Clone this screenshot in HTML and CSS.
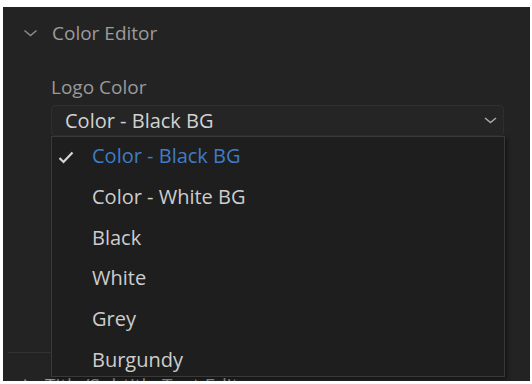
FILE: index.html
```html
<!DOCTYPE html>
<html>
<head>
	<title>Color Editor</title>
	<link rel="stylesheet" href="styles.css">
</head>
<body>
	<div class="panel">
		<div class="section-head">
			<svg class="section-head__icon" width="15" height="8" viewBox="0 0 15 8"><path d="M1.5 1.5 L7.5 6.5 L13.5 1.5" fill="none" stroke="#8a8a8a" stroke-width="1.6"/></svg>
			<span class="section-head__title">Color Editor</span>
		</div>
		<div class="field">
			<div class="field__label">Logo Color</div>
			<div class="select">
				<span class="select__value">Color - Black BG</span>
				<svg class="select__icon" width="13" height="7" viewBox="0 0 13 7"><path d="M1 1 L6.5 5.5 L12 1" fill="none" stroke="#a8a8a8" stroke-width="1.6"/></svg>
				<ul class="menu">
					<li class="menu__item menu__item--active">
						<svg class="menu__check" width="16" height="13" viewBox="0 0 16 13"><path d="M1.5 7 L5.5 11 L14.5 1.5" fill="none" stroke="#d6d6d6" stroke-width="2.2"/></svg>
						Color - Black BG
					</li>
					<li class="menu__item">Color - White BG</li>
					<li class="menu__item">Black</li>
					<li class="menu__item">White</li>
					<li class="menu__item">Grey</li>
					<li class="menu__item">Burgundy</li>
				</ul>
			</div>
		</div>
		<div class="divider"></div>
		<div class="section-head section-head--next">
			<svg class="section-head__icon" width="8" height="15" viewBox="0 0 8 15"><path d="M1.5 1.5 L6.5 7.5 L1.5 13.5" fill="none" stroke="#8a8a8a" stroke-width="1.6"/></svg>
			<span class="section-head__title">Title/Subtitle Text Editor</span>
		</div>
	</div>
</body>
</html>
```

FILE: styles.css
```css
* {
	box-sizing: border-box;
}
html, body {
	margin: 0;
	padding: 0;
	background: #FFFFFF;
}
body {
	padding: 7px 2px 0 3px;
	font-family: "Open Sans", "Noto Sans", sans-serif;
}
.panel {
	position: relative;
	height: 374px;
	background: #232323;
	overflow: hidden;
}
.section-head {
	display: flex;
	flex-direction: row;
	align-items: center;
	height: 24px;
	margin-top: 14px;
	padding-left: 20px;
}
.section-head__icon {
	display: block;
	margin-right: 14px;
}
.section-head__title {
	color: #9c9c9c;
	font-size: 19px;
}
.field {
	padding: 0 26px 0 48px;
	margin-top: 30px;
}
.field__label {
	color: #9a9a9a;
	font-size: 19px;
	line-height: 24px;
}
.select {
	position: relative;
	display: flex;
	flex-direction: row;
	align-items: center;
	justify-content: space-between;
	height: 31px;
	margin-top: 6px;
	padding: 0 6px 0 13px;
	border: 1px solid #2f2f2f;
	border-radius: 4px;
	background: #252525;
}
.select__value {
	color: #d2d2d2;
	font-size: 20px;
}
.menu {
	position: absolute;
	top: 30px;
	left: -1px;
	right: -2px;
	height: 241px;
	margin: 0;
	padding: 0;
	list-style: none;
	background: #1e1e1e;
	border: 1px solid #393939;
	box-shadow: 2px 2px 4px rgba(0, 0, 0, 0.45);
	z-index: 2;
}
.menu__item {
	position: relative;
	height: 40.8px;
	line-height: 37px;
	padding-left: 40px;
	color: #cdcdcd;
	font-size: 20px;
}
.menu__item--active {
	color: #3f7cc8;
}
.menu__check {
	position: absolute;
	left: 6px;
	top: 14px;
}
.divider {
	height: 1px;
	margin-top: 216px;
	margin-left: 5px;
	width: 60px;
	background: #323232;
}
.section-head--next {
	margin-top: 20px;
}
```
